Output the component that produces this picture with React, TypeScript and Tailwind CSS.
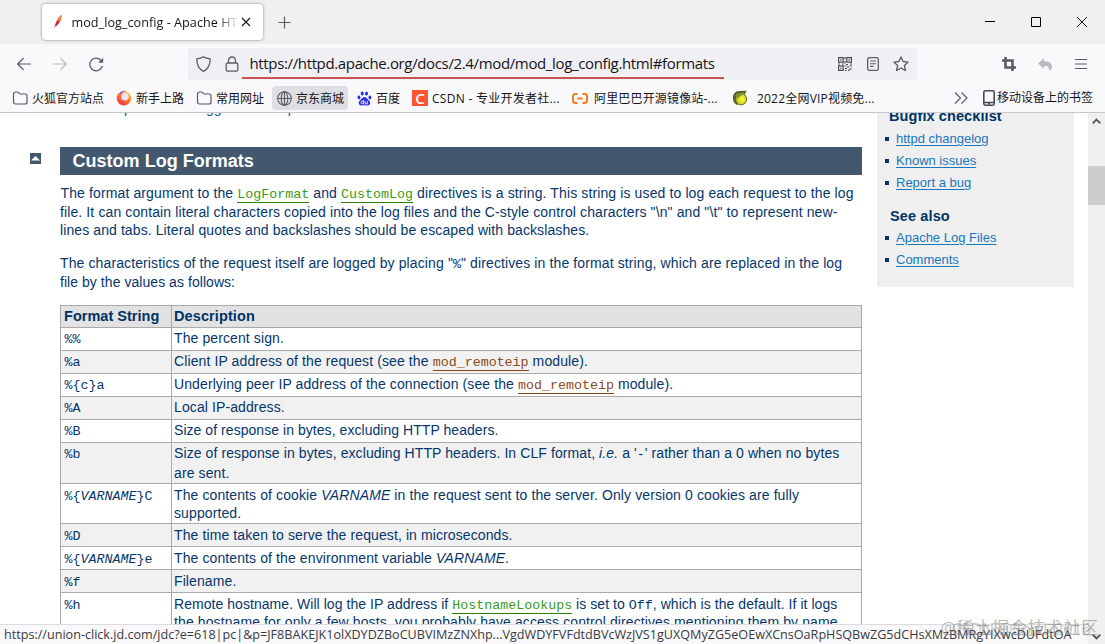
import type { ReactNode } from 'react';

const ui = "font-['Open_Sans','Noto_Sans_CJK_SC',sans-serif]";
const mono = "font-['Liberation_Mono',monospace] text-[13.33px] tracking-normal";

function Code({ children }: { children: ReactNode }) {
  return <code className={mono}>{children}</code>;
}

// directive links are green, module links are brown
function DirectiveLink({ children }: { children: ReactNode }) {
  return (
    <a className={`${mono} inline-block h-[17px] leading-[18px] border-b border-[#287f00] text-[#3a9a16]`}>{children}</a>
  );
}

function ModuleLink({ children }: { children: ReactNode }) {
  return (
    <a className={`${mono} inline-block h-[17px] leading-[18px] border-b border-[#8b4513] text-[#8b4a1a]`}>{children}</a>
  );
}

interface FormatRow {
  height: string;
  format: ReactNode;
  lines: ReactNode[];
}

const formatRows: FormatRow[] = [
  { height: 'h-[23px]', format: '%%', lines: ['The percent sign.'] },
  {
    height: 'h-[23px]',
    format: '%a',
    lines: [<>Client IP address of the request (see the <ModuleLink>mod_remoteip</ModuleLink> module).</>],
  },
  {
    height: 'h-[23px]',
    format: '%{c}a',
    lines: [<>Underlying peer IP address of the connection (see the <ModuleLink>mod_remoteip</ModuleLink> module).</>],
  },
  { height: 'h-[23px]', format: '%A', lines: ['Local IP-address.'] },
  {
    height: 'h-[23px]',
    format: '%B',
    lines: [<span className="tracking-[0.05px]">Size of response in bytes, excluding HTTP headers.</span>],
  },
  {
    height: 'h-[41px]',
    format: '%b',
    lines: [
      <span className="tracking-[0.09px]">
        Size of response in bytes, excluding HTTP headers. In CLF format, <em>i.e.</em> a '<Code>-</Code>' rather than a 0 when no bytes
      </span>,
      'are sent.',
    ],
  },
  {
    height: 'h-[40px]',
    format: <>%{'{'}<em>VARNAME</em>{'}'}C</>,
    lines: [
      <>The contents of cookie <em>VARNAME</em> in the request sent to the server. Only version 0 cookies are fully</>,
      'supported.',
    ],
  },
  { height: 'h-[23px]', format: '%D', lines: ['The time taken to serve the request, in microseconds.'] },
  {
    height: 'h-[23px]',
    format: <>%{'{'}<em>VARNAME</em>{'}'}e</>,
    lines: [<>The contents of the environment variable <em>VARNAME</em>.</>],
  },
  { height: 'h-[23px]', format: '%f', lines: ['Filename.'] },
  {
    height: 'h-[60px]',
    format: '%h',
    lines: [
      <span className="tracking-[0.05px]">
        Remote hostname. Will log the IP address if <DirectiveLink>HostnameLookups</DirectiveLink> is set to <Code>Off</Code>, which is the default. If it logs
      </span>,
      'the hostname for only a few hosts, you probably have access control directives mentioning them by name.',
    ],
  },
];

function FormatTable() {
  return (
    <div className="mt-[13px] w-[802px] border border-b-0 border-[#aaa]">
      <div className="flex h-[22px] border-b border-[#aaa] bg-[#e2e2e2] text-[14.5px] leading-[21px] font-bold tracking-[0.02px] text-[#003366]">
        <div className="w-[111px] border-r border-[#aaa] pl-[3px]">Format String</div>
        <div className="pl-[2px] tracking-[0.1px]">Description</div>
      </div>
      {formatRows.map((row, i) => (
        <div
          key={i}
          className={`flex border-b border-[#aaa] leading-[19px] ${row.height} ${i % 2 ? 'bg-[#f1f1f1]' : 'bg-white'}`}
        >
          <div className={`w-[111px] shrink-0 border-r border-[#aaa] pl-[3.5px] ${i > 5 ? 'pt-[2px]' : 'pt-px'}`}>
            <Code>{row.format}</Code>
          </div>
          <div className={`pl-[2px] ${i > 5 ? 'pt-[2px]' : 'pt-px'}`}>
            {row.lines.map((line, j) => (
              <div key={j} className={i > 5 ? 'h-[18px]' : 'h-[20px]'}>{line}</div>
            ))}
          </div>
        </div>
      ))}
    </div>
  );
}

function FolderIcon() {
  return (
    <svg width="16" height="14" viewBox="0 0 16 14" fill="none" stroke="#5b5b66" strokeWidth="1.2">
      <path d="M1.5 3a2 2 0 0 1 2-2h2.400l2 2h5.600a1.500 1.500 0 0 1 1.500 1.500v6.500a2 2 0 0 1-2 2H3.500a2 2 0 0 1-2-2z" />
    </svg>
  );
}

function FirefoxIcon() {
  return (
    <svg width="16" height="16" viewBox="0 0 16 16">
      <defs>
        <linearGradient id="fx" x1="0.8" y1="0" x2="0.2" y2="1">
          <stop offset="0" stopColor="#ffd23c" />
          <stop offset="0.5" stopColor="#ff7a1f" />
          <stop offset="1" stopColor="#e8255f" />
        </linearGradient>
      </defs>
      <path d="M8.500.8c1 .2 2 1 2.600 1.500 2.500.9 4.200 3.300 4.200 6A7.300 7.300 0 1 1 1.600 4.600L2 2.800l1 .9C4.300 3.200 5.600 3 6.700 3.200z" fill="url(#fx)" />
      <circle cx="9" cy="6.800" r="3.700" fill="#f1e3fb" />
      <path d="M3 3.700C4.500 1.500 7 .3 9.500 1c-2 .5-3.500 1.700-4.300 3.300z" fill="#a04be0" />
    </svg>
  );
}

function BaiduIcon() {
  return (
    <svg width="15" height="15" viewBox="0 0 15 15" fill="#2a2fe0">
      <ellipse cx="5.200" cy="2.600" rx="1.500" ry="2" />
      <ellipse cx="9.500" cy="2.600" rx="1.500" ry="2" transform="rotate(12 9.500 2.600)" />
      <ellipse cx="2" cy="6.300" rx="1.500" ry="1.900" transform="rotate(-15 2 6.300)" />
      <ellipse cx="12.900" cy="6.500" rx="1.400" ry="1.900" />
      <path d="M7.400 6c1.900 0 2.400 1.600 3.700 2.700 1.200 1 2.200 1.900 2 3.500-.2 1.700-1.600 2.400-3.200 2.200-1.700-.2-3.200-.2-4.900 0-1.800.2-3.200-.6-3.300-2.400 0-1.500 1-2.300 2.200-3.400C5.100 7.600 5.600 6 7.400 6z" />
      <path d="M6.600 9v3.800H5.200a1.200 1.200 0 0 1 0-2.500h1.400M8.200 10.200v2.100q0 .6.600.6h1.500v-2.700" fill="none" stroke="#fff" strokeWidth="0.9" />
    </svg>
  );
}

function LemonIcon() {
  return (
    <svg width="16" height="16" viewBox="0 0 16 16">
      <path d="M1 8C.8 4 3.500.8 8 1l6.500-.3-1.500 3.600z" fill="#4f5b28" />
      <path d="M1 7.500C.6 11 2.600 14.500 6 15L6 4z" fill="#565d30" />
      <ellipse cx="9.200" cy="9.200" rx="5.400" ry="5.700" fill="#d5dc1b" stroke="#5f6a20" strokeWidth="1" />
      <path d="M3 5.500C5 2.500 9 2 13.500 3 10.500 4.500 8 6 5.500 8.500z" fill="#7d9434" />
      <ellipse cx="10" cy="9.300" rx="2.500" ry="3" fill="#f3f03d" />
    </svg>
  );
}

function TitleBar() {
  return (
    <div className="flex h-[44px] shrink-0 bg-[#f0f0f0]">
      <div className="mt-[4px] ml-[42px] flex h-[36px] w-[221px] items-center rounded-[4px] bg-white shadow-[0_0_3px_rgba(0,0,0,0.45)]">
        <svg className="ml-[9px] shrink-0" width="14" height="16" viewBox="0 0 14 16">
          <path d="M10.500 1C7 3.500 4 9 3.300 14.500l.8-1.900c3-1 6.400-6 6.400-11.600z" fill="#c92a4b" />
          <path d="M10.500 1C8.500 2.500 7 4.600 5.900 6.800l3.400.4c.9-2 1.300-4 1.200-6.200z" fill="#ee7f36" />
        </svg>
        <div className="mt-[2px] ml-[6.500px] w-[167px] overflow-hidden bg-linear-to-r from-[#15141a] from-87% to-transparent bg-clip-text text-[12.6px] tracking-[0.05px] whitespace-nowrap text-transparent">
          mod_log_config - Apache HT
        </div>
        <svg className="ml-[2px] shrink-0" width="10" height="10" viewBox="0 0 10 10" stroke="#15141a" strokeWidth="1.100">
          <path d="M1 1l8 8M9 1l-8 8" />
        </svg>
      </div>
      <svg className="mt-[16px] ml-[15px]" width="13" height="13" viewBox="0 0 13 13" stroke="#5b5b66" strokeWidth="1.200">
        <path d="M6.500.5v12M.5 6.500h12" />
      </svg>
      <div className="mt-[17px] mr-[18px] ml-auto flex items-start gap-[36px]">
        <svg width="10" height="10" viewBox="0 0 10 10" stroke="#000">
          <path d="M0 4.500h10" />
        </svg>
        <svg width="10" height="10" viewBox="0 0 10 10" fill="none" stroke="#000">
          <path d="M.5.5h9v9h-9z" />
        </svg>
        <svg width="10" height="10" viewBox="0 0 10 10" stroke="#000" strokeWidth="0.900">
          <path d="M0 0l10 10M10 0L0 10" />
        </svg>
      </div>
    </div>
  );
}

function NavBar() {
  return (
    <div className="flex h-[40px] shrink-0 items-center bg-[#f9f9fb]">
      <svg className="ml-[17px]" width="14" height="14" viewBox="0 0 14 14" fill="none" stroke="#5b5b66" strokeWidth="1.200" strokeLinecap="round">
        <path d="M13.400 7H.8M6.200 1.500L.7 7l5.500 5.500" />
      </svg>
      <svg className="ml-[22px]" width="14" height="14" viewBox="0 0 14 14" fill="none" stroke="#bdbdc2" strokeWidth="1.200" strokeLinecap="round">
        <path d="M.6 7h12.600M7.800 1.500L13.300 7l-5.500 5.500" />
      </svg>
      <svg className="ml-[22px]" width="15" height="15" viewBox="0 0 15 15" fill="none" stroke="#5b5b66" strokeWidth="1.300" strokeLinecap="round">
        <path d="M13.200 9.300A6.300 6.300 0 1 1 11.800 3.200l1.100 1.100" />
        <path d="M14.200.8v5H9.200z" fill="#5b5b66" stroke="none" />
      </svg>
      <div className="ml-[84px] flex h-[32px] w-[729px] items-center rounded-[3px] bg-[#f0f0f4]">
        <svg className="ml-[8px] shrink-0" width="15" height="16" viewBox="0 0 15 16" fill="none" stroke="#5b5b66" strokeWidth="1.300">
          <path d="M7.500.8c2 1.400 4.300 1.900 6.700 2.100 0 5.500-1.500 10-6.700 12.400C2.300 12.900.8 8.400.8 2.900 3.200 2.700 5.500 2.200 7.500.8z" strokeLinejoin="round" />
        </svg>
        <svg className="ml-[14px] shrink-0" width="14" height="16" viewBox="0 0 14 16" fill="none" stroke="#5b5b66" strokeWidth="1.300">
          <rect x="1.200" y="7" width="11.600" height="8.200" rx="1.500" />
          <path d="M3.500 7V4.500a3.500 3.500 0 0 1 7 0V7" />
        </svg>
        <div className="ml-[3px] flex h-[30px] w-[482px] shrink-0 items-center border-b-2 border-[#c75450] pl-[7.500px] text-[15px] tracking-[-0.358px] whitespace-nowrap text-[#15141a]">
          https://httpd.apache.org/docs/2.4/mod/mod_log_config.html#formats
        </div>
        {/* QR code */}
        <svg className="ml-[114px] shrink-0" width="14" height="14" viewBox="0 0 14 14" fill="none" stroke="#4c4c57" strokeWidth="1.200">
          <path d="M.6.600h4.600v4.600H.6zM8.800.600h4.600v4.600H8.800zM.6 8.800h4.600v4.600H.6z" />
          <path d="M2.200 2.900h1.400M10.400 2.900h1.400M2.200 11.100h1.400M7 0v2M7 4v2.500M0 7h2M4 7h2M8 7.500h2M12 7h2M6.500 9h2M9 10h2M11.500 9h2.500M7 11.500h2M11 12h3M7 13.400h1.500M10 13.400h1.500" />
        </svg>
        <svg className="ml-[15px] shrink-0" width="12" height="14" viewBox="0 0 12 14" fill="none" stroke="#5b5b66" strokeWidth="1.300">
          <rect x=".7" y=".7" width="10.600" height="12.600" rx="1.600" />
          <path d="M3 4h6M3 6.700h6M3 9.400h3.500" strokeWidth="1.100" />
        </svg>
        <svg className="ml-[14px] shrink-0" width="16" height="16" viewBox="0 0 16 16" fill="none" stroke="#5b5b66" strokeWidth="1.300" strokeLinejoin="round">
          <path d="M8 .9l2.100 4.600 5 .6-3.700 3.400 1 5L8 12l-4.400 2.500 1-5L.9 6.100l5-.6z" />
        </svg>
      </div>
      <svg className="ml-[85px]" width="14" height="14" viewBox="0 0 14 14" fill="none" stroke="#5b5b66" strokeWidth="2.600">
        <path d="M3.500 0v10.500H14M0 3.500h10.500V14" />
      </svg>
      <svg className="ml-[22px]" width="15" height="13" viewBox="0 0 15 13" fill="#b9b9be">
        <path d="M6 0v3.200c5 0 8 2 8 5.500 0 1.800-1.200 3.600-3.200 4.300 1-2.900-.3-5-4.800-5V11L.2 5.600z" />
      </svg>
      <svg className="ml-[22px]" width="12" height="12" viewBox="0 0 12 12" stroke="#5b5b66" strokeWidth="1.200">
        <path d="M0 1.500h12M0 6h12M0 10.500h12" />
      </svg>
    </div>
  );
}

function BookmarksBar() {
  return (
    <div className="flex h-[29px] shrink-0 items-center border-b border-[#c8c8cc] bg-[#f9f9fb] text-[12px] leading-[24px] whitespace-nowrap text-[#15141a]">
      <div className="ml-[12px] flex w-[104px] items-center gap-[4px]"><FolderIcon /><span className="pt-px">火狐官方站点</span></div>
      <div className="flex w-[80px] items-center gap-[4px]"><FirefoxIcon /><span className="pt-px">新手上路</span></div>
      <div className="flex w-[76px] items-center gap-[4px]"><FolderIcon /><span className="pt-px">常用网址</span></div>
      <div className="flex h-[24px] w-[76px] items-center gap-[4px] rounded-[4px] bg-[#dedee3] pl-[5px]">
        <svg className="shrink-0" width="15" height="15" viewBox="0 0 15 15" fill="none" stroke="#5b5b66" strokeWidth="1.100">
          <circle cx="7.500" cy="7.500" r="6.800" />
          <ellipse cx="7.500" cy="7.500" rx="3.300" ry="6.800" />
          <path d="M7.500.7v13.600M.7 7.500h13.600" />
        </svg>
        <span className="pt-px">京东商城</span>
      </div>
      <div className="ml-[9px] flex w-[55px] items-center gap-[4px]"><BaiduIcon /><span className="pt-px">百度</span></div>
      <div className="flex w-[160px] items-center gap-[4px]">
        <span className="flex size-[16px] items-center justify-center bg-[#fc5531] text-[15px] leading-[16px] font-semibold text-white">C</span>
        <span className="pt-px tracking-[0.28px]">CSDN - 专业开发者社...</span>
      </div>
      <div className="flex w-[160px] items-center gap-[6px]">
        <svg width="16" height="11" viewBox="0 0 16 11" fill="none" stroke="#f47a1f" strokeWidth="1.900">
          <path d="M5.500 1H3.200A2.200 2.200 0 0 0 1 3.200v4.600A2.200 2.200 0 0 0 3.200 10h2.300M10.500 1h2.300A2.200 2.200 0 0 1 15 3.200v4.600a2.200 2.200 0 0 1-2.200 2.200h-2.300M5.300 5.500h5.400" />
        </svg>
        <span className="pt-px tracking-[0.17px]">阿里巴巴开源镜像站-...</span>
      </div>
      <div className="flex items-center gap-[9px]">
        <LemonIcon />
        <span className="pt-px tracking-[0.2px]">2022全网VIP视频免...</span>
      </div>
      <svg className="ml-auto" width="14" height="12" viewBox="0 0 14 12" fill="none" stroke="#5b5b66" strokeWidth="1.200">
        <path d="M1 .500L6.500 6 1 11.500M7.500.500L13 6l-5.500 5.500" />
      </svg>
      <svg className="ml-[15px]" width="12" height="16" viewBox="0 0 12 16" fill="none" stroke="#4a4a55" strokeWidth="1.600">
        <rect x=".8" y=".8" width="10.400" height="14.400" rx="1.600" />
        <path d="M1 12.500h10M5 13.800h2" strokeWidth="1.300" />
      </svg>
      <div className="mr-[12px] ml-[2px]">移动设备上的书签</div>
    </div>
  );
}

function SidebarLinks({ items }: { items: string[] }) {
  return (
    <ul className="text-[13px] leading-[22px] text-[#1a76bd]">
      {items.map((item) => (
        <li key={item} className="flex h-[22px] items-center pl-[8px]">
          <span className="mr-[7px] size-[4px] bg-[#003366]" />
          <a className="underline underline-offset-2">{item}</a>
        </li>
      ))}
    </ul>
  );
}

function Sidebar() {
  return (
    <aside className="ml-[15px] h-[181px] w-[197px] shrink-0 bg-[#efefef]">
      <h3 className="mt-[-7px] h-[22px] pl-[12px] text-[14.5px] leading-[20px] font-bold tracking-[0.1px] text-[#003366]">Bugfix checklist</h3>
      <SidebarLinks items={['httpd changelog', 'Known issues', 'Report a bug']} />
      <h3 className="mt-[11px] h-[22px] pl-[13px] text-[14.5px] leading-[22px] font-bold tracking-[0.12px] text-[#003366]">See also</h3>
      <SidebarLinks items={['Apache Log Files', 'Comments']} />
    </aside>
  );
}

export default function App() {
  return (
    <div className={`relative flex h-[644px] w-[1105px] flex-col overflow-hidden bg-white ${ui}`}>
      <TitleBar />
      <NavBar />
      <BookmarksBar />
      <div className="flex h-[531px] overflow-hidden">
        <div className="w-[60px] shrink-0 pt-[40px] pl-[30px]">
          <svg width="11" height="11" viewBox="0 0 11 11">
            <path d="M0 0h11v11H0z" fill="#43586f" />
            <path d="M1 7.500L5.500 3 10 7.500z" fill="#fff" />
          </svg>
        </div>
        <main className="w-[802px] shrink-0 font-['Liberation_Sans',sans-serif] text-[14px] leading-[19px] tracking-[0.105px] whitespace-nowrap text-[#06366c]">
          {/* bottom of the paragraph scrolled under the toolbar */}
          <div className="mt-[-14px] h-[19px] pl-[64px] text-[#1a4f86]">p<span className="pl-[74px]">gg</span><span className="pl-[66px]">p</span></div>
          <h2 className="mt-[29px] h-[28px] bg-[#43586f] pl-[12.5px] text-[18px] leading-[28px] font-bold tracking-[0.02px] text-white">
            Custom Log Formats
          </h2>
          <div className="mt-[9px] h-[19px] pl-[0.5px] tracking-[0.12px]">
            The format argument to the <DirectiveLink>LogFormat</DirectiveLink> and <DirectiveLink>CustomLog</DirectiveLink> directives is a string. This string is used to log each request to the log
          </div>
          <div className="h-[18px] tracking-[0.115px]">
            file. It can contain literal characters copied into the log files and the C-style control characters "\n" and "\t" to represent new-
          </div>
          <div className="h-[19px] tracking-[0.095px]">lines and tabs. Literal quotes and backslashes should be escaped with backslashes.</div>
          <div className="mt-[14px] h-[19px] tracking-[0.115px]">
            The characteristics of the request itself are logged by placing "<Code>%</Code>" directives in the format string, which are replaced in the log
          </div>
          <div className="h-[19px] tracking-[0.05px]">file by the values as follows:</div>
          <FormatTable />
        </main>
        <div className="font-['Liberation_Sans',sans-serif]">
          <Sidebar />
        </div>
        <div className="ml-auto flex w-[17px] flex-col items-center bg-[#f0f0f0]">
          <svg className="mt-[5px]" width="9" height="6" viewBox="0 0 9 6" fill="none" stroke="#55555a" strokeWidth="1.800">
            <path d="M.7 5.300L4.500 1.500l3.800 3.800" />
          </svg>
          <div className="mt-[42px] h-[39px] w-full bg-[#cdcdcd]" />
          <svg className="mt-auto mb-[4px]" width="9" height="6" viewBox="0 0 9 6" fill="none" stroke="#55555a" strokeWidth="1.800">
            <path d="M.7.700l3.800 3.800L8.300.700" />
          </svg>
        </div>
      </div>
      {/* link target shown over the page */}
      <div className="absolute bottom-0 left-0 h-[20px] w-[1088px] border-t border-[#dcdce0] bg-[#f9f9fb] pl-[4px] text-[12.6px] leading-[20px] whitespace-nowrap text-[#3a3a42]">
        https://union-click.jd.com/jdc?e=618|pc|&amp;p=JF8BAKEJK1olXDYDZBoCUBVIMzZNXhp...VgdWDYFVFdtdBVcWzJVS1gUXQMyZG5eOEwXCnsOaRpHSQBwZG5dCHsXMzBMRgYIXwcDUFdtOA
      </div>
      <div className="absolute right-[6px] bottom-[5px] text-[17px] leading-[22px] tracking-[0.8px] whitespace-nowrap text-[#777]/50">
        @稀土掘金技术社区
      </div>
      <div className="absolute right-[14px] bottom-[4px] text-[16px] leading-[22px] whitespace-nowrap text-[#777]/40">CSDN @Sowl_2016</div>
    </div>
  );
}
